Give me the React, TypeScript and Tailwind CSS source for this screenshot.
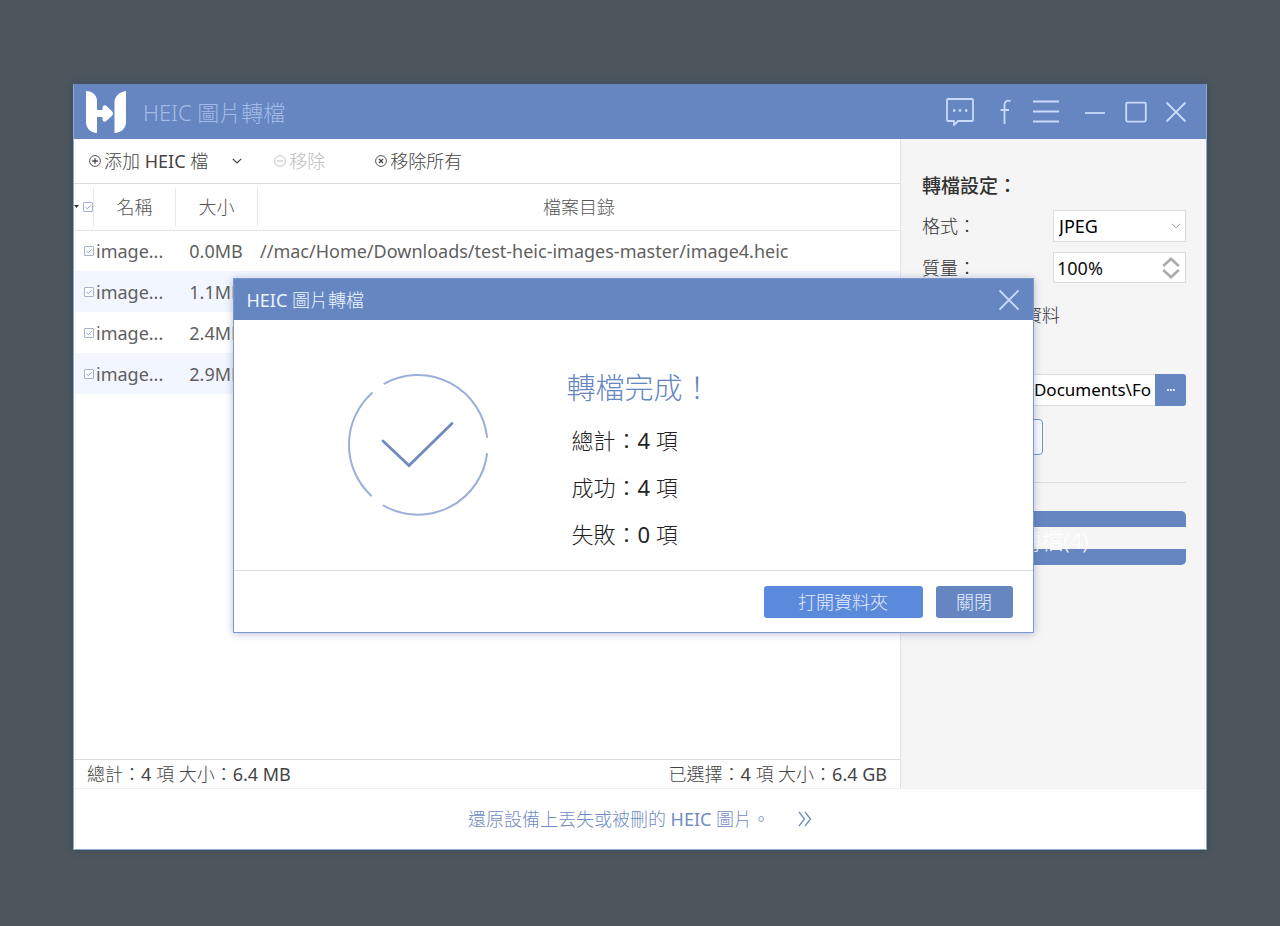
import { useState } from 'react';
import type { ReactNode } from 'react';

const files = [
  { name: 'image...', size: '0.0MB', path: '//mac/Home/Downloads/test-heic-images-master/image4.heic' },
  { name: 'image...', size: '1.1MB', path: '' },
  { name: 'image...', size: '2.4MB', path: '' },
  { name: 'image...', size: '2.9MB', path: '' }
];

const results = [
  { label: '總計', count: 4 },
  { label: '成功', count: 4 },
  { label: '失敗', count: 0 }
];

const Logo = () => (
  <svg viewBox="0 0 41 42" className="h-[42px] w-[41px]" fill="#fff" aria-hidden="true">
    <path d="M0 0C6 0 11 4 11 10V42H10C4 41 0 37 0 31Z" />
    <path d="M40 0V31C40 37 36 41 29 42H28.500V11C28.500 5 34 1 40 0Z" />
    <path d="M10 19H16.500V17C16.500 14.500 18.500 13.500 20.500 15L26 20.200C27.300 21.500 27.300 23.500 26 24.800L20.500 29.800C18.500 31.500 16.500 30.500 16.500 28V26H10Z" />
  </svg>
);

const TickBox = ({ label }: { label: string }) => (
  <span className="relative block h-[10px] w-[10px]">
    <input
      type="checkbox"
      defaultChecked
      aria-label={label}
      className="peer block h-full w-full appearance-none rounded-[1px] border border-[#a3b1cc] bg-white"
    />
    <svg
      viewBox="0 0 10 10"
      className="pointer-events-none absolute inset-0 hidden h-full w-full peer-checked:block"
      fill="none"
      stroke="#8ea2ca"
    >
      <path d="M2.3 4.8 4.3 6.7 7.8 3.4" />
    </svg>
  </span>
);

const ToolIcon = ({ children }: { children: ReactNode }) => (
  <svg viewBox="0 0 12 12" className="h-3 w-3" fill="none" stroke="currentColor" aria-hidden="true">
    <circle cx="6" cy="6" r="5.4" strokeWidth="0.9" />
    {children}
  </svg>
);

const TitleBar = () => (
  <header className="flex h-[55px] shrink-0 items-center bg-[#6586c1] pl-3 pr-[19px]">
    <Logo />
    <h1 className="ml-4 flex-1 text-[22px] leading-8 font-light whitespace-nowrap text-[#a5bae6]">HEIC 圖片轉檔</h1>
    <div className="flex items-center text-[#c9dafb]">
      <button aria-label="意見反饋">
        <svg viewBox="0 0 28 28" className="h-7 w-7" fill="none" stroke="currentColor" strokeWidth="1.8">
          <path d="M2 1H26Q27 1 27 2V22Q27 23 26 23H12L8 27V23H2Q1 23 1 22V2Q1 1 2 1Z" strokeLinejoin="round" />
          <path d="M7 12.5H9.4M12.8 12.5H15.2M19 12.5H21.4" strokeWidth="2.4" />
        </svg>
      </button>
      <a href="#facebook" aria-label="Facebook" className="ml-[26px]">
        <svg viewBox="0 0 11 26" className="h-[26px] w-[11px]" fill="none" stroke="currentColor" strokeWidth="1.8">
          <path d="M10.5 2.2C7 .8 4.5 2.4 4.5 6V25M.5 11H9" />
        </svg>
      </a>
      <button aria-label="選單" className="ml-[22px]">
        <svg viewBox="0 0 26 24" className="h-6 w-[26px]" fill="none" stroke="currentColor" strokeWidth="1.8">
          <path d="M0 1.5H26M0 11.500H26M0 21.5H26" />
        </svg>
      </button>
      <button aria-label="最小化" className="ml-[26px]">
        <svg viewBox="0 0 20 20" className="h-5 w-5" fill="none" stroke="currentColor" strokeWidth="1.8">
          <path d="M0 11H20" />
        </svg>
      </button>
      <button aria-label="最大化" className="ml-5">
        <svg viewBox="0 0 22 22" className="h-[22px] w-[22px]" fill="none" stroke="currentColor" strokeWidth="1.8">
          <rect x="1.2" y="1.6" width="19.6" height="19" rx="1.5" />
        </svg>
      </button>
      <button aria-label="關閉視窗" className="ml-[18px]">
        <svg viewBox="0 0 22 22" className="h-[22px] w-[22px]" fill="none" stroke="currentColor" strokeWidth="1.8">
          <path d="M1.5 1.5 20.5 20.5M20.5 1.5 1.5 20.5" />
        </svg>
      </button>
    </div>
  </header>
);

const Toolbar = () => (
  <div className="flex h-[45px] shrink-0 items-center border-b border-[#dcdcdc] pl-[15px] text-lg whitespace-nowrap text-[#444]">
    <button className="flex items-center gap-[3px]">
      <ToolIcon>
        <path d="M6 3.2V8.8M3.2 6H8.8" strokeWidth="1.3" />
      </ToolIcon>
      <span>
        <span className="font-light">添加</span> HEIC <span className="font-light">檔</span>
      </span>
    </button>
    <button aria-label="更多添加方式" className="ml-6">
      <svg viewBox="0 0 10 6" className="h-[6px] w-[10px]" fill="none" stroke="currentColor" strokeWidth="1.2">
        <path d="M.8.8 5 5 9.2.8" />
      </svg>
    </button>
    <button disabled className="ml-8 flex items-center gap-[3px] font-light text-[#bdbdbd]">
      <ToolIcon>
        <path d="M3.2 6H8.8" />
      </ToolIcon>
      移除
    </button>
    <button className="ml-[50px] flex items-center gap-[3px] font-light">
      <ToolIcon>
        <path d="M4 4 8 8M8 4 4 8" strokeWidth="1.3" />
      </ToolIcon>
      移除所有
    </button>
  </div>
);

const FileTable = () => (
  <table className="w-full table-fixed border-collapse text-lg whitespace-nowrap text-[#5f5f5f]">
    <colgroup>
      <col className="w-[19px]" />
      <col className="w-[82px]" />
      <col className="w-[82px]" />
      <col />
    </colgroup>
    <thead className="border-b border-[#e6e6e6] text-[#555]">
      <tr className="h-[46px]">
        <th className="p-0">
          <span className="flex items-center gap-1">
            <svg viewBox="0 0 5 3" className="h-[3px] w-[5px]" fill="#333" aria-hidden="true">
              <path d="M0 0H5L2.5 3Z" />
            </svg>
            <TickBox label="全選" />
          </span>
        </th>
        {['名稱', '大小', '檔案目錄'].map((title) => (
          <th key={title} className="p-0 font-light">
            <span className="block border-l border-[#e9e9e9] leading-[38px]">{title}</span>
          </th>
        ))}
      </tr>
    </thead>
    <tbody>
      {files.map((file, index) => (
        <tr key={index} className="h-[41px] even:bg-[#f2f6fe]">
          <td className="p-0 pl-[10px]">
            <TickBox label={`${file.name} ${file.size}`} />
          </td>
          <td className="p-0 pl-[3px]">{file.name}</td>
          <td className="p-0 text-center">{file.size}</td>
          <td className="p-0 pl-[3px]">{file.path}</td>
        </tr>
      ))}
    </tbody>
  </table>
);

const Settings = () => {
  const [quality, setQuality] = useState(100);

  return (
    <aside className="w-[306px] shrink-0 border-l border-[#e2e2e2] bg-[#f5f5f5] pt-[31px] pr-5 pl-[21px] text-lg text-[#333]">
      <h2 className="text-[19px] leading-8 font-medium">轉檔設定：</h2>
      <div className="mt-2 flex h-8 items-center justify-between">
        <label htmlFor="format" className="font-light">格式：</label>
        <span className="relative block h-8 w-[133px]">
          <select
            id="format"
            className="h-full w-full appearance-none border border-[#dcdcdc] bg-white pl-[5px] text-black"
          >
            <option>JPEG</option>
            <option>PNG</option>
          </select>
          <svg
            viewBox="0 0 10 6"
            className="pointer-events-none absolute top-[13px] right-[5px] h-[6px] w-[10px]"
            fill="none"
            stroke="#999"
          >
            <path d="M1 .8 5 4.8 9 .8" />
          </svg>
        </span>
      </div>
      <div className="mt-[10px] flex h-[31px] items-center justify-between">
        <label htmlFor="quality" className="font-light">質量：</label>
        <span className="flex h-full w-[133px] items-center border border-[#dcdcdc] bg-white pr-[5px] pl-[3px]">
          <input
            id="quality"
            value={`${quality}%`}
            onChange={(e) => setQuality(Math.min(100, parseInt(e.target.value, 10) || 0))}
            className="w-0 flex-1 text-[#111] outline-none"
          />
          <span className="flex flex-col gap-[2px]">
            <button aria-label="提高質量" onClick={() => setQuality(Math.min(100, quality + 1))}>
              <svg viewBox="0 0 18 10" className="block h-[10px] w-[18px]" fill="none" stroke="#aaa" strokeWidth="2.6">
                <path d="M1.2 9 9 1.8 16.8 9" />
              </svg>
            </button>
            <button aria-label="降低質量" onClick={() => setQuality(Math.max(1, quality - 1))}>
              <svg viewBox="0 0 18 10" className="block h-[10px] w-[18px]" fill="none" stroke="#aaa" strokeWidth="2.6">
                <path d="M1.2 1 9 8.2 16.8 1" />
              </svg>
            </button>
          </span>
        </span>
      </div>
      <label className="mt-4 flex h-8 items-center gap-2 font-light">
        <input type="checkbox" defaultChecked className="h-4 w-4" />
        <span className="w-[114px] text-right whitespace-nowrap">保留 Exif 資料</span>
      </label>
      <div className="mt-[43px] flex h-8">
        <input
          aria-label="輸出路徑"
          defaultValue="\Documents\Fo"
          className="w-0 flex-1 border border-r-0 border-[#dcdcdc] bg-white pr-1 text-right text-[17px] text-black outline-none"
        />
        <button aria-label="瀏覽" className="flex w-[31px] items-center justify-center rounded-r-[3px] bg-[#6586c1]">
          <svg viewBox="0 0 8 2" className="h-[2px] w-2" fill="#dbe6ff">
            <path d="M0 0H2V2H0ZM3 0H5V2H3ZM6 0H8V2H6Z" />
          </svg>
        </button>
      </div>
      <button className="mt-[13px] h-9 w-[121px] rounded border border-[#6f97ba] bg-[#f8fbff] font-light text-[#6586c1]">
        打開資料夾
      </button>
      <hr className="mt-[27px] border-[#dcdcdc]" />
      <button className="mt-7 flex h-[54px] w-full items-center rounded-[5px] bg-[#6586c1]">
        <span className="block h-[22px] w-full bg-[#f5f5f5] text-[22px] leading-[26px] font-light text-white">轉檔(4)</span>
      </button>
    </aside>
  );
};

const ResultIcon = () => (
  <svg viewBox="0 0 142 142" className="h-[142px] w-[142px]" fill="none" strokeLinecap="round" aria-hidden="true">
    <g stroke="#9bafd9" strokeWidth="2">
      <path d="M37.5 9.6A69.5 69.5 0 0 1 140 63" />
      <path d="M140 80A69.5 69.5 0 0 1 36.5 131.5" />
      <path d="M24 121.5A69.5 69.5 0 0 1 25 19" />
    </g>
    <path d="M36 67 62 91.500 105 49.500" stroke="#7189bf" strokeWidth="2.800" />
  </svg>
);

const ResultDialog = ({ onClose }: { onClose: () => void }) => (
  <div className="absolute inset-0 flex items-center justify-center pr-[14px] pb-[22px]">
    <section
      role="dialog"
      aria-labelledby="dialog-title"
      className="w-[801px] border border-[#7d99cb] bg-white shadow-[0_1px_8px_rgba(80,100,150,0.4)]"
    >
      <header className="flex h-[41px] items-center justify-between bg-[#6586c1] pr-[13px] pl-[13px]">
        <h2 id="dialog-title" className="text-lg text-[#eef4ff]">
          HEIC <span className="font-light">圖片轉檔</span>
        </h2>
        <button aria-label="關閉對話框" onClick={onClose}>
          <svg viewBox="0 0 22 22" className="h-[22px] w-[22px]" fill="none" stroke="#c9dafb" strokeWidth="1.8">
            <path d="M1.5 1.5 20.5 20.5M20.5 1.5 1.5 20.5" />
          </svg>
        </button>
      </header>
      <div className="flex h-[250px] pt-[45px] pl-[113px]">
        <div className="pt-[9px]">
          <ResultIcon />
        </div>
        <div className="ml-[78px]">
          <h3 className="text-[29px] leading-[46px] font-light text-[#6586c1]">轉檔完成！</h3>
          <ul className="pt-[6px] pl-[5px] text-[22px] leading-[47px] text-[#222]">
            {results.map((result) => (
              <li key={result.label}>
                <span className="font-light">{result.label}：</span>
                {result.count} <span className="font-light">項</span>
              </li>
            ))}
          </ul>
        </div>
      </div>
      <footer className="flex h-[62px] items-center justify-end gap-[13px] border-t border-[#d8dde2] pr-5 text-lg font-light text-[#e4edff]">
        <button className="h-8 w-[159px] rounded-[3px] bg-[#5b89db]">打開資料夾</button>
        <button onClick={onClose} className="h-8 w-[77px] rounded-[3px] bg-[#6586c1]">關閉</button>
      </footer>
    </section>
  </div>
);

const App = () => {
  const [open, setOpen] = useState(true);

  return (
    <div className="flex min-h-screen bg-[#4d565d] px-[73px] pt-[84px] pb-[76px] font-['Noto_Sans','Noto_Sans_CJK_TC',sans-serif]">
      <div className="relative flex flex-1 flex-col border border-t-0 border-[#8ea9cf] bg-white shadow-[0_0_6px_rgba(40,60,100,0.5)]">
        <TitleBar />
        <div className="flex flex-1">
          <main className="flex min-w-0 flex-1 flex-col">
            <Toolbar />
            <div className="flex-1">
              <FileTable />
            </div>
            <div className="flex h-[29px] items-center justify-between border-t border-[#dcdcdc] px-[13px] text-lg text-[#444]">
              <p>
                <span className="font-light">總計：</span>4 <span className="font-light">項 大小：</span>6.4 MB
              </p>
              <p>
                <span className="font-light">已選擇：</span>4 <span className="font-light">項 大小：</span>6.4 GB
              </p>
            </div>
          </main>
          <Settings />
        </div>
        <footer className="flex h-[61px] shrink-0 items-center justify-center border-t border-[#f0f0f0] text-lg text-[#6f8cc3]">
          <a href="#recover" className="flex items-center gap-7">
            <span>
              <span className="font-light">還原設備上丟失或被刪的</span> HEIC <span className="font-light">圖片。</span>
            </span>
            <svg viewBox="0 0 14 16" className="h-4 w-[14px]" fill="none" stroke="currentColor" strokeWidth="1.3">
              <path d="M1 1 6.500 8 1 15M7 1 12.500 8 7 15" />
            </svg>
          </a>
        </footer>
        {open && <ResultDialog onClose={() => setOpen(false)} />}
      </div>
    </div>
  );
};

export default App;
